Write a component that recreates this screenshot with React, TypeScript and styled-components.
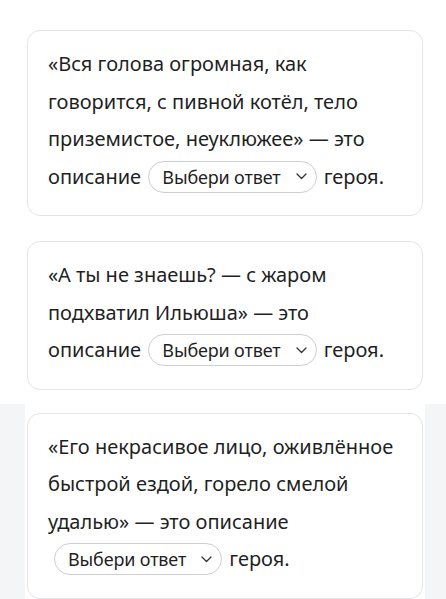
import React from "react";
import styled, { createGlobalStyle } from "styled-components";

const Global = createGlobalStyle`
  html, body { margin: 0; padding: 0; background: #ffffff; }
  body { font-family: "Noto Sans", "Open Sans", sans-serif; color: #1f1f1f; }
`;

const Page = styled.div`
  width: 446px;
  display: flex;
  flex-direction: column;
`;

const WhiteSection = styled.section`
  background: #ffffff;
  padding: 30px 23px 14px 27px;
  display: flex;
  flex-direction: column;
  gap: 25px;
`;

const GraySection = styled.section`
  background: #f4f5f6;
  padding: 0 21px 0 25px;
`;

const Column = styled.div`
  background: #ffffff;
  padding: 9px 2px 0 2px;
`;

const Card = styled.div`
  border: 1px solid #e4e4e6;
  border-radius: 13px;
  background: #ffffff;
  padding: 14px 18px 20px 20px;
  font-size: 20px;
  line-height: 37.5px;
  letter-spacing: 0;
`;

const Select = styled.span<{ $lead?: number }>`
  display: inline-flex;
  align-items: center;
  gap: 15px;
  height: 32px;
  box-sizing: border-box;
  padding: 0 9px 0 13px;
  margin: 0 2px 0 ${(p) => p.$lead ?? 2}px;
  border: 1px solid #cfcfd3;
  border-radius: 16px;
  font-size: 18px;
  letter-spacing: -0.15px;
  line-height: 20px;
  vertical-align: 0px;
  color: #1f1f1f;
  background: #fff;
`;

const Chevron = () => (
  <svg width="11" height="7" viewBox="0 0 11 7" fill="none">
    <path d="M1 1l4.5 4.5L10 1" stroke="#333" strokeWidth="1.3" strokeLinecap="round" strokeLinejoin="round" />
  </svg>
);

const Dropdown = ({ lead }: { lead?: number }) => (
  <Select $lead={lead}>
    Выбери ответ
    <Chevron />
  </Select>
);

export default function App() {
  return (
    <>
      <Global />
      <Page>
        <WhiteSection>
          <Card>
            «Вся голова огромная, как говорится, с пивной котёл, тело приземистое, неуклюжее» — это описание <Dropdown /> героя.
          </Card>
          <Card>
            «А ты не знаешь? — с жаром подхватил Ильюша» — это описание <Dropdown /> героя.
          </Card>
        </WhiteSection>
        <GraySection>
          <Column>
            <Card>
              «Его некрасивое лицо, оживлённое быстрой ездой, горело смелой удалью» — это описание <Dropdown lead={6} /> героя.
            </Card>
          </Column>
        </GraySection>
      </Page>
    </>
  );
}
